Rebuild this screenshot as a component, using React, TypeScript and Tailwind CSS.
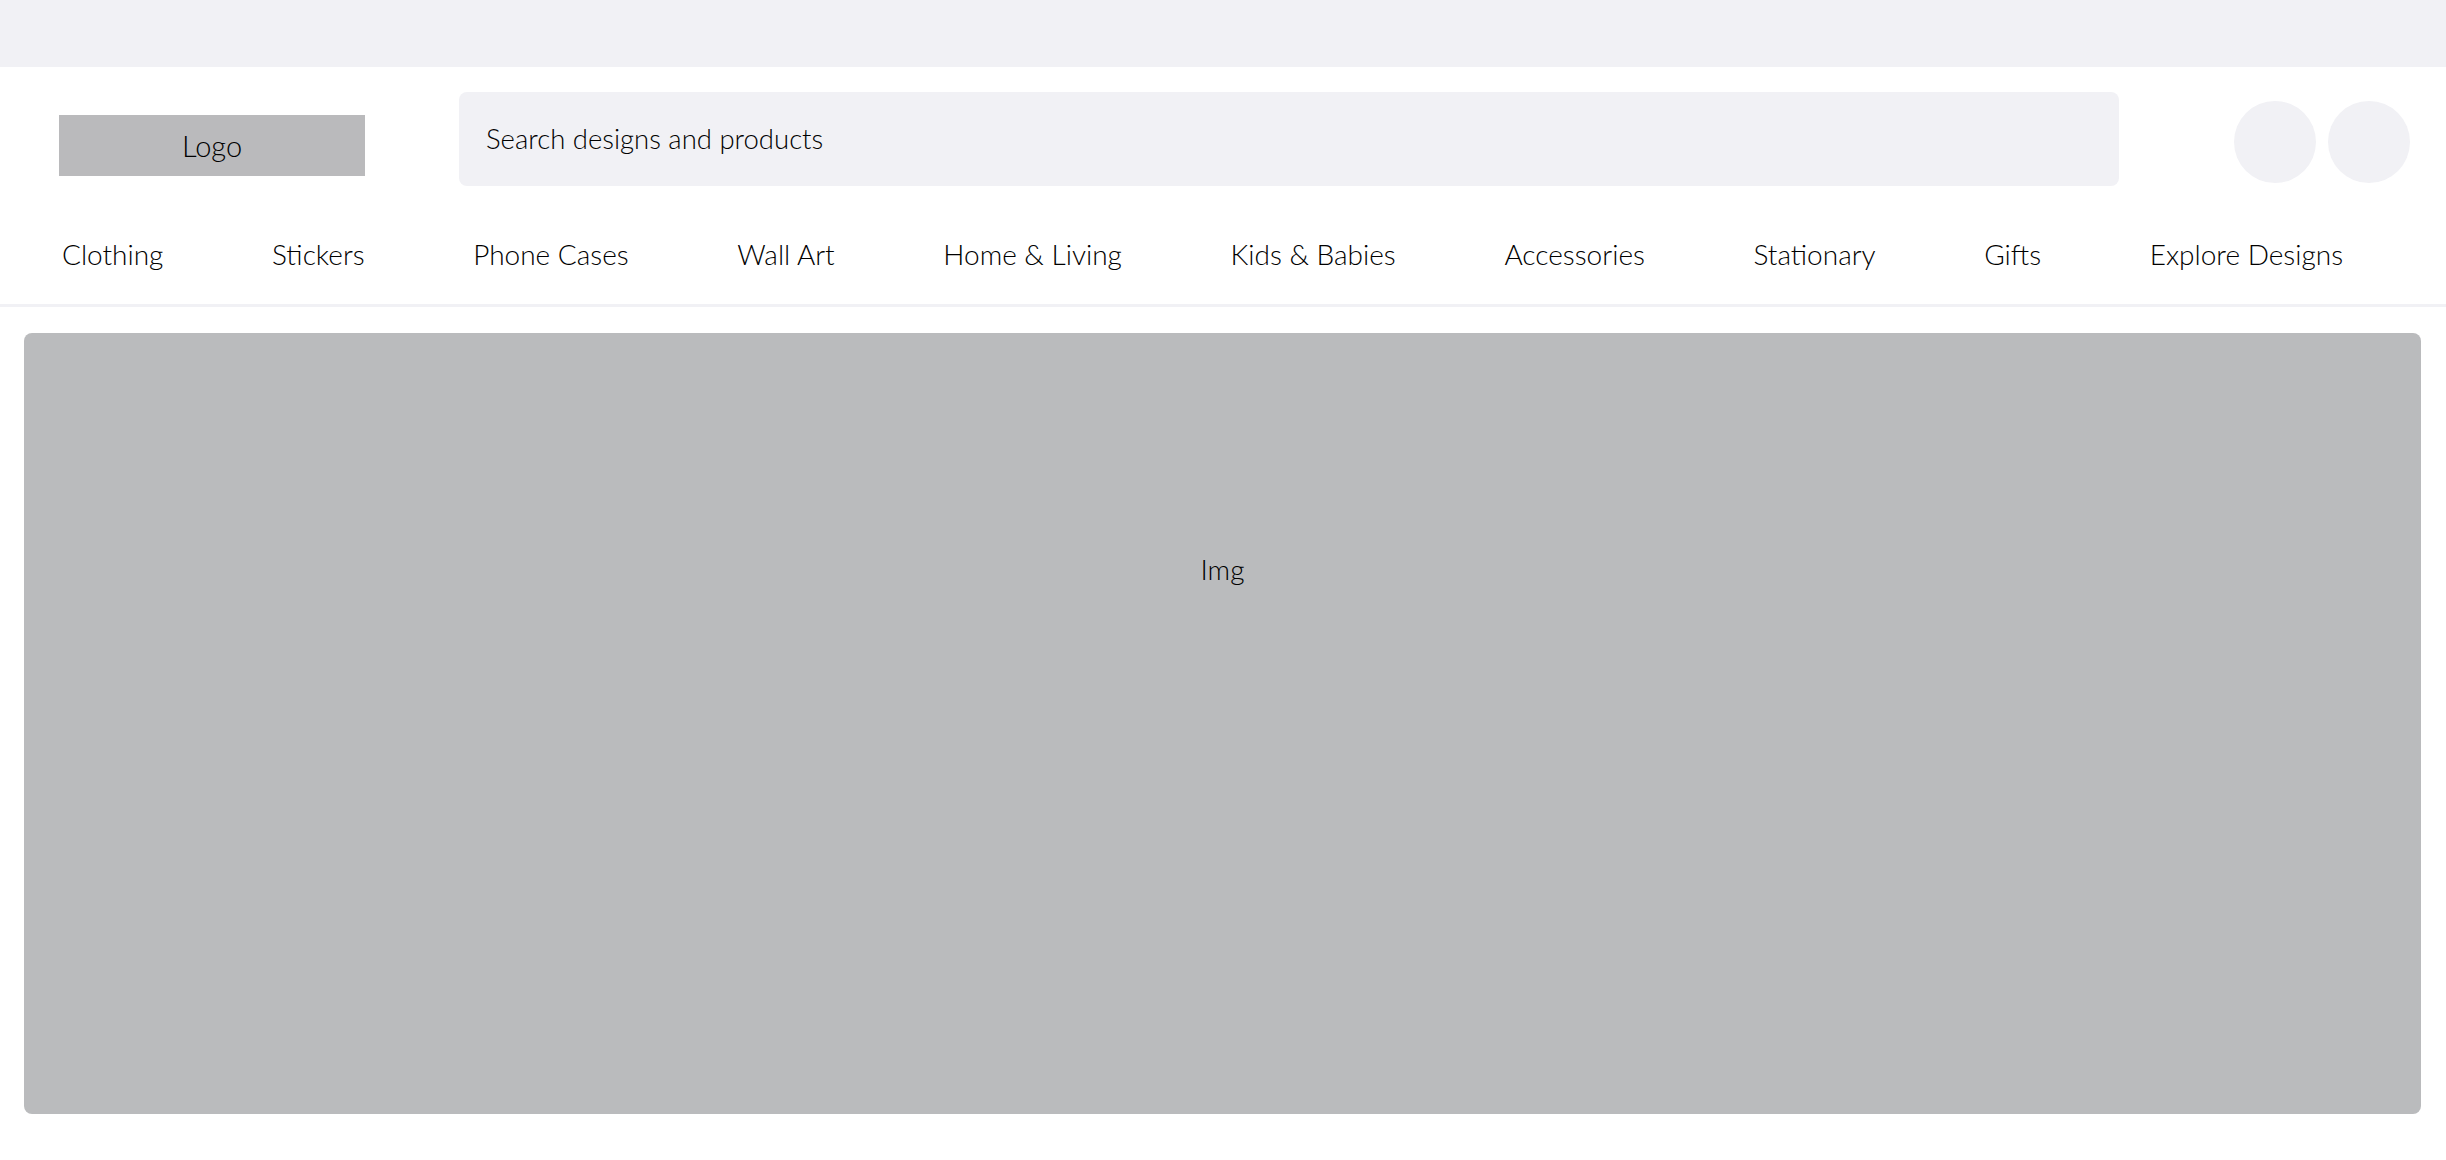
const categories = [
  "Clothing",
  "Stickers",
  "Phone Cases",
  "Wall Art",
  "Home & Living",
  "Kids & Babies",
  "Accessories",
  "Stationary",
  "Gifts",
  "Explore Designs",
];

export default function App() {
  return (
    <div className="min-h-screen bg-white text-black font-light font-['Lato','Noto_Sans',sans-serif]">
      {/* Top strip */}
      <div className="h-[67px] bg-[#f1f1f5]" />

      {/* Header */}
      <header className="flex items-start pl-[59px] pr-[36px] pt-[25px]">
        <div className="mt-[23px] flex h-[61px] w-[306px] shrink-0 items-center justify-center bg-[#bababc] text-[29px]">
          Logo
        </div>
        <div className="ml-[94px] flex h-[94px] flex-1 items-center rounded-lg bg-[#f1f1f5] pl-[27px] text-[27.5px]">
          Search designs and products
        </div>
        <div className="ml-[115px] mt-[9px] flex gap-[12px]">
          <div className="h-[82px] w-[82px] rounded-full bg-[#f1f1f5]" />
          <div className="h-[82px] w-[82px] rounded-full bg-[#f1f1f5]" />
        </div>
      </header>

      {/* Category nav */}
      <nav className="flex items-center gap-[108.6px] border-b-[3px] border-[#f1f1f5] pl-[62px] pt-[50px] pb-[32px] text-[28px] leading-[36px]">
        {categories.map((c) => (
          <a key={c} href="#" className="whitespace-nowrap">
            {c}
          </a>
        ))}
      </nav>

      {/* Hero image placeholder */}
      <main className="pl-[24px] pr-[25px] pt-[26px]">
        <div className="flex h-[781px] justify-center rounded-lg bg-[#babbbd] pt-[218px] text-[28px] leading-[36px]">
          Img
        </div>
      </main>
    </div>
  );
}
